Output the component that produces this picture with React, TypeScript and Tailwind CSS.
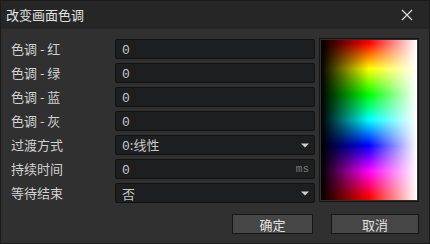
import { Fragment } from "react";

const font = { fontFamily: '"Noto Sans CJK SC", "Noto Sans", sans-serif' };
const mono = { fontFamily: '"Liberation Mono", "DejaVu Sans Mono", monospace' };

function Caret() {
  return (
    <svg width="8" height="5" viewBox="0 0 8 5" className="shrink-0">
      <path d="M0 0.5 H8 L4 4.5 Z" fill="#d0d0d0" />
    </svg>
  );
}

function Field({ value, suffix, select }: { value: string; suffix?: string; select?: boolean }) {
  return (
    <div className="flex h-[20px] w-[200px] items-center justify-between rounded-[2px] border border-[#121212] bg-[#1d1e20] pl-[6px] pr-[5px]">
      <span className="text-[13px] leading-none text-[#c8c8c8]">
        {value.startsWith("0") ? (
          <>
            <span className="text-[13px]" style={mono}>0</span>
            <span style={font}>{value.slice(1)}</span>
          </>
        ) : (
          <span style={font}>{value}</span>
        )}
      </span>
      {suffix && <span className="text-[11px] leading-none text-[#7a7a7a]" style={mono}>{suffix}</span>}
      {select && <Caret />}
    </div>
  );
}

const rows: { label: string; value: string; suffix?: string; select?: boolean }[] = [
  { label: "色调 - 红", value: "0" },
  { label: "色调 - 绿", value: "0" },
  { label: "色调 - 蓝", value: "0" },
  { label: "色调 - 灰", value: "0" },
  { label: "过渡方式", value: "0:线性", select: true },
  { label: "持续时间", value: "0", suffix: "ms" },
  { label: "等待结束", value: "否", select: true },
];

export default function App() {
  return (
    <div className="flex h-[244px] w-[430px] flex-col border border-[#1a1a1a] bg-[#303030] text-[#d4d4d4]" style={font}>
      <div className="flex h-[28px] shrink-0 items-center justify-between bg-[#262626] pl-[5px] pr-[16px]">
        <span className="text-[13px] text-[#e2e2e2]">改变画面色调</span>
        <svg width="12" height="12" viewBox="0 0 12 12">
          <path d="M1 1 L11 11 M11 1 L1 11" stroke="#dcdcdc" strokeWidth="1.2" />
        </svg>
      </div>
      <div className="flex flex-col pl-[10px] pr-[10px]">
        <div className="flex">
          <div className="grid grid-cols-[104px_200px] gap-y-[4px] pt-[10px]">
            {rows.map((r) => (
              <Fragment key={r.label}>
                <div className="flex h-[20px] items-center text-[13px] text-[#d2d2d2]">{r.label}</div>
                <Field value={r.value} suffix={r.suffix} select={r.select} />
              </Fragment>
            ))}
          </div>
          <div className="ml-[4px] mt-[9px] h-[164px] w-[100px] border border-[#151515] p-px">
            <div
              className="h-full w-full"
              style={{
                background:
                  "linear-gradient(to right, #000 0%, rgba(0,0,0,0) 50%, rgba(255,255,255,0) 50%, #fff 100%), linear-gradient(to bottom, #f00 2%, #ff0 18%, #0f0 34%, #0ff 50%, #00f 66%, #f0f 82%, #f00 98%)",
              }}
            />
          </div>
        </div>
        <div className="mt-[11px] flex justify-end gap-[18px]">
          <button className="h-[20px] w-[81px] border border-[#161616] bg-[#464646] text-[13px] leading-none text-[#e0e0e0]">确定</button>
          <button className="h-[20px] w-[88px] border border-[#161616] bg-[#464646] text-[13px] leading-none text-[#e0e0e0]">取消</button>
        </div>
      </div>
    </div>
  );
}
